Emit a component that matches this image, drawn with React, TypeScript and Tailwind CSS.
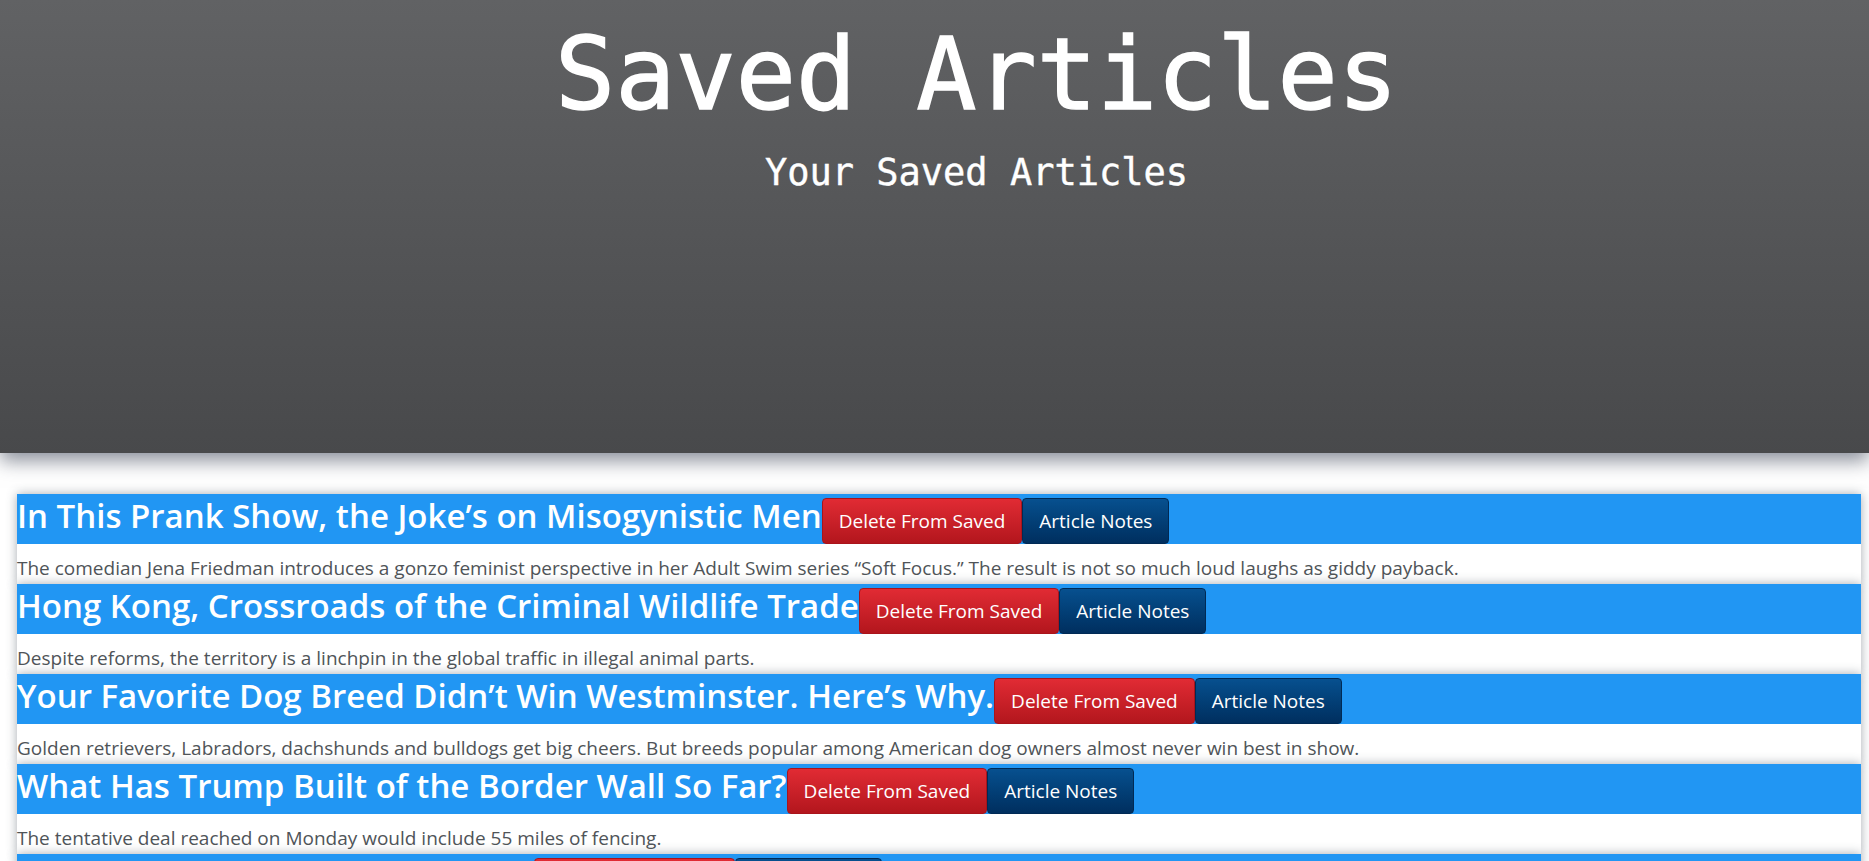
import React from "react";

type Article = {
  title: string;
  summary: string;
};

const articles: Article[] = [
  {
    title: "In This Prank Show, the Joke’s on Misogynistic Men",
    summary:
      "The comedian Jena Friedman introduces a gonzo feminist perspective in her Adult Swim series “Soft Focus.” The result is not so much loud laughs as giddy payback.",
  },
  {
    title: "Hong Kong, Crossroads of the Criminal Wildlife Trade",
    summary:
      "Despite reforms, the territory is a linchpin in the global traffic in illegal animal parts.",
  },
  {
    title: "Your Favorite Dog Breed Didn’t Win Westminster. Here’s Why.",
    summary:
      "Golden retrievers, Labradors, dachshunds and bulldogs get big cheers. But breeds popular among American dog owners almost never win best in show.",
  },
  {
    title: "What Has Trump Built of the Border Wall So Far?",
    summary:
      "The tentative deal reached on Monday would include 55 miles of fencing.",
  },
  {
    title: "A Quiet Town Braces for a Storm",
    summary: "Residents stocked up on supplies ahead of the weekend.",
  },
];

const ArticleCard = ({ article }: { article: Article }) => {
  return (
    <div className="bg-white shadow-[0_0_10px_rgba(60,70,85,0.45)]">
      {/* title row */}
      <div className="flex h-[50px] items-baseline bg-[#2196f3]">
        <h2 className="text-[33px] leading-[44px] font-semibold text-white">
          {article.title}
        </h2>
        <button className="rounded-[4px] border border-[#a9141b] bg-linear-to-b from-[#e12b34] to-[#b3161d] px-4 py-2 text-[19px] leading-[28px] text-white">
          Delete From Saved
        </button>
        <button className="rounded-[4px] border border-[#002a55] bg-linear-to-b from-[#07508f] to-[#002f5f] px-4 py-2 text-[19px] leading-[28px] text-white">
          Article Notes
        </button>
      </div>
      {/* summary */}
      <p className="h-[40px] pt-[11px] text-[19px] leading-[27px] text-[#4f5458]">
        {article.summary}
      </p>
    </div>
  );
};

export default function App() {
  return (
    <div
      className="min-h-screen overflow-hidden bg-white"
      style={{ fontFamily: '"Open Sans", "Noto Sans", sans-serif' }}
    >
      <header className="relative z-10 h-[453px] bg-linear-to-b from-[#616264] to-[#48494b] shadow-[0_8px_18px_rgba(45,55,75,0.55)]">
        <div className="flex flex-col items-center pt-[15px] pl-[84px] text-white font-['DejaVu_Sans_Mono',monospace]">
          <h1 className="text-[100px] leading-[120px] [-webkit-text-stroke:1.5px_white]">
            Saved Articles
          </h1>
          <p className="mt-[15px] text-[37px] leading-[46px] [-webkit-text-stroke:0.4px_white]">
            Your Saved Articles
          </p>
        </div>
      </header>

      <main className="pt-[41px] pl-[17px] pr-[8px]">
        {articles.map((a) => (
          <ArticleCard key={a.title} article={a} />
        ))}
      </main>
    </div>
  );
}
